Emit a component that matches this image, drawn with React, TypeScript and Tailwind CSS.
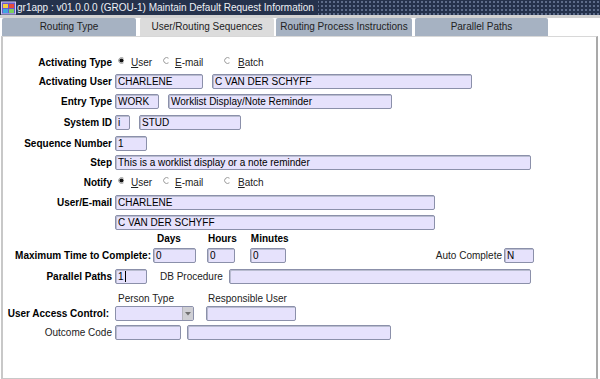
import type { ReactNode } from "react";

const Field = ({ w, value, className = "" }: { w: string; value?: ReactNode; className?: string }) => (
  <div
    className={`${w} h-[15px] shrink-0 flex items-center pl-[2px] bg-[#e6e2fc] border border-[#8b90aa] rounded-[2px] shadow-[inset_1px_1px_0_#b9bcd0] text-black overflow-hidden whitespace-nowrap ${className}`}
  >
    {value}
  </div>
);

const Radio = ({ checked }: { checked?: boolean }) => (
  <svg width="7" height="7" viewBox="0 0 8 8" className="shrink-0 -mt-[5px]">
    <path d="M6.3 1.4 A3.4 3.4 0 1 0 6.3 6.6" stroke="#8a8a8a" strokeWidth="1" fill="none" />
    {checked ? <circle cx="4" cy="4" r="2.4" fill="#111" /> : null}
  </svg>
);

const RadioGroup = () => (
  <div className="flex items-center ml-[3px] text-[#222]">
    <div className="flex items-center gap-[6px] w-[45px]">
      <Radio checked />
      <span>
        <span className="underline">U</span>ser
      </span>
    </div>
    <div className="flex items-center gap-[5px] w-[61px]">
      <Radio />
      <span>
        <span className="underline">E</span>-mail
      </span>
    </div>
    <div className="flex items-center gap-[7px]">
      <Radio />
      <span>
        <span className="underline">B</span>atch
      </span>
    </div>
  </div>
);

const Label = ({ children, bold = true }: { children: ReactNode; bold?: boolean }) => (
  <div className={`w-[112px] shrink-0 text-right pr-[3px] ${bold ? "font-bold" : "text-[#222]"} whitespace-nowrap`}>
    {children}
  </div>
);

const Row = ({ children, mt }: { children: ReactNode; mt: string }) => (
  <div className={`flex items-center h-[15px] ${mt}`}>{children}</div>
);

const TABS = [
  { label: "Routing Type", w: "w-[134px]", ml: "ml-[2px]" },
  { label: "User/Routing Sequences", w: "w-[135px]", ml: "ml-[3px]", active: true },
  { label: "Routing Process Instructions", w: "w-[136px]", ml: "ml-[2px]" },
  { label: "Parallel Paths", w: "w-[133px]", ml: "ml-[3px]" },
];

export default function App() {
  return (
    <div className="w-[600px] h-[379px] overflow-hidden bg-white flex flex-col font-['Liberation_Sans',Arial,sans-serif] text-[10px] leading-none text-black">
      {/* title bar */}
      <div className="h-[15px] shrink-0 flex items-center bg-[#25324c] bg-[radial-gradient(circle,#5d6c8a_0.8px,transparent_1px)] bg-[length:4px_4px]">
        <div className="h-[15px] flex items-center bg-[#25324c] pr-[4px]">
          <svg width="15" height="14" viewBox="0 0 15 14" className="ml-[1px] mr-[1px]">
            <rect x="0.5" y="1" width="14" height="12" fill="#6a5acd" stroke="#cfc9f0" />
            <rect x="2" y="3" width="5" height="4" fill="#f4d03f" />
            <rect x="8" y="3" width="5" height="4" fill="#e74c3c" />
            <rect x="2" y="8" width="5" height="4" fill="#3fa7e0" />
            <rect x="8" y="8" width="5" height="4" fill="#7ccf5c" />
          </svg>
          <span className="text-[#eef0f5] whitespace-nowrap">
            gr1app : v01.0.0.0 (GROU-1) Maintain Default Request Information
          </span>
        </div>
      </div>
      <div className="h-[3px] shrink-0 bg-[#d2d2d2]" />
      {/* tabs */}
      <div className="h-[18px] shrink-0 flex items-stretch bg-white">
        {TABS.map((t) => (
          <div
            key={t.label}
            className={`${t.w} ${t.ml} flex items-center justify-center rounded-t-[2px] text-[#222] ${
              t.active ? "bg-[#dcdcdc] border-l border-white" : "bg-[#a6b2c2]"
            }`}
          >
            {t.label}
          </div>
        ))}
      </div>
      {/* panel */}
      <div className="flex-1 ml-[1px] mr-[2px] border-l-2 border-[#c8c8c8] border-r-2 border-r-[#a9a9a9] border-b border-b-[#c8c8c8] border-t border-t-[#d8d8d8] flex flex-col pt-[18px]">
        <Row mt="mt-0">
          <Label>Activating Type</Label>
          <RadioGroup />
        </Row>
        <Row mt="mt-[4px]">
          <Label>Activating User</Label>
          <Field w="w-[88px]" value="CHARLENE" />
          <Field w="w-[260px]" value="C VAN DER SCHYFF" className="ml-[9px]" />
        </Row>
        <Row mt="mt-[5px]">
          <Label>Entry Type</Label>
          <Field w="w-[44px]" value="WORK" />
          <Field w="w-[224px]" value="Worklist Display/Note Reminder" className="ml-[9px]" />
        </Row>
        <Row mt="mt-[6px]">
          <Label>System ID</Label>
          <Field w="w-[15px]" value="i" />
          <Field w="w-[102px]" value="STUD" className="ml-[9px]" />
        </Row>
        <Row mt="mt-[6px]">
          <Label>Sequence Number</Label>
          <Field w="w-[32px]" value="1" />
        </Row>
        <Row mt="mt-[4px]">
          <Label>Step</Label>
          <Field w="w-[416px]" value="This is a worklist display or a note reminder" />
        </Row>
        <Row mt="mt-[5px]">
          <Label>Notify</Label>
          <RadioGroup />
        </Row>
        <Row mt="mt-[5px]">
          <Label>User/E-mail</Label>
          <Field w="w-[320px]" value="CHARLENE" />
        </Row>
        <Row mt="mt-[5px]">
          <Label> </Label>
          <Field w="w-[320px]" value="C VAN DER SCHYFF" />
        </Row>
        <Row mt="mt-[1px]">
          <div className="flex font-bold">
            <span className="ml-[154px]">Days</span>
            <span className="ml-[27px]">Hours</span>
            <span className="ml-[14px]">Minutes</span>
          </div>
        </Row>
        <div className="flex items-center h-[15px] mt-[2px] w-[531px]">
          <div className="w-[148px] shrink-0 text-right font-bold whitespace-nowrap">Maximum Time to Complete:</div>
          <Field w="w-[43px]" value="0" className="ml-[2px]" />
          <Field w="w-[28px]" value="0" className="ml-[11px]" />
          <Field w="w-[36px]" value="0" className="ml-[15px]" />
          <div className="ml-auto flex items-center">
            <span className="text-[#222] mr-[2px]">Auto Complete</span>
            <Field w="w-[30px]" value="N" />
          </div>
        </div>
        <Row mt="mt-[6px]">
          <Label>Parallel Paths</Label>
          <Field
            w="w-[32px]"
            value={
              <>
                1<span className="inline-block h-[11px] border-l border-black ml-[1px]" />
              </>
            }
          />
          <span className="ml-[13px] text-[#222] whitespace-nowrap">DB Procedure</span>
          <Field w="w-[302px]" value="" className="ml-[6px]" />
        </Row>
        <Row mt="mt-[7px]">
          <div className="flex text-[#222]">
            <span className="ml-[115px]">Person Type</span>
            <span className="ml-[34px]">Responsible User</span>
          </div>
        </Row>
        <Row mt="mt-0">
          <div className="w-[112px] shrink-0 text-right pr-[6px] font-bold whitespace-nowrap">User Access Control:</div>
          <div className="w-[79px] h-[15px] shrink-0 flex bg-[#e6e2fc] border border-[#8b90aa] rounded-[2px] overflow-hidden">
            <div className="flex-1" />
            <div className="w-[11px] bg-[#cfcfd4] border-l border-[#b5b5bd] flex items-center justify-center">
              <svg width="6" height="4" viewBox="0 0 6 4">
                <path d="M0 0 H6 L3 3.5 Z" fill="#707070" />
              </svg>
            </div>
          </div>
          <Field w="w-[90px]" value="" className="ml-[12px]" />
        </Row>
        <Row mt="mt-[4px]">
          <Label bold={false}>Outcome Code</Label>
          <Field w="w-[66px]" value="" />
          <Field w="w-[204px]" value="" className="ml-[6px]" />
        </Row>
      </div>
    </div>
  );
}
